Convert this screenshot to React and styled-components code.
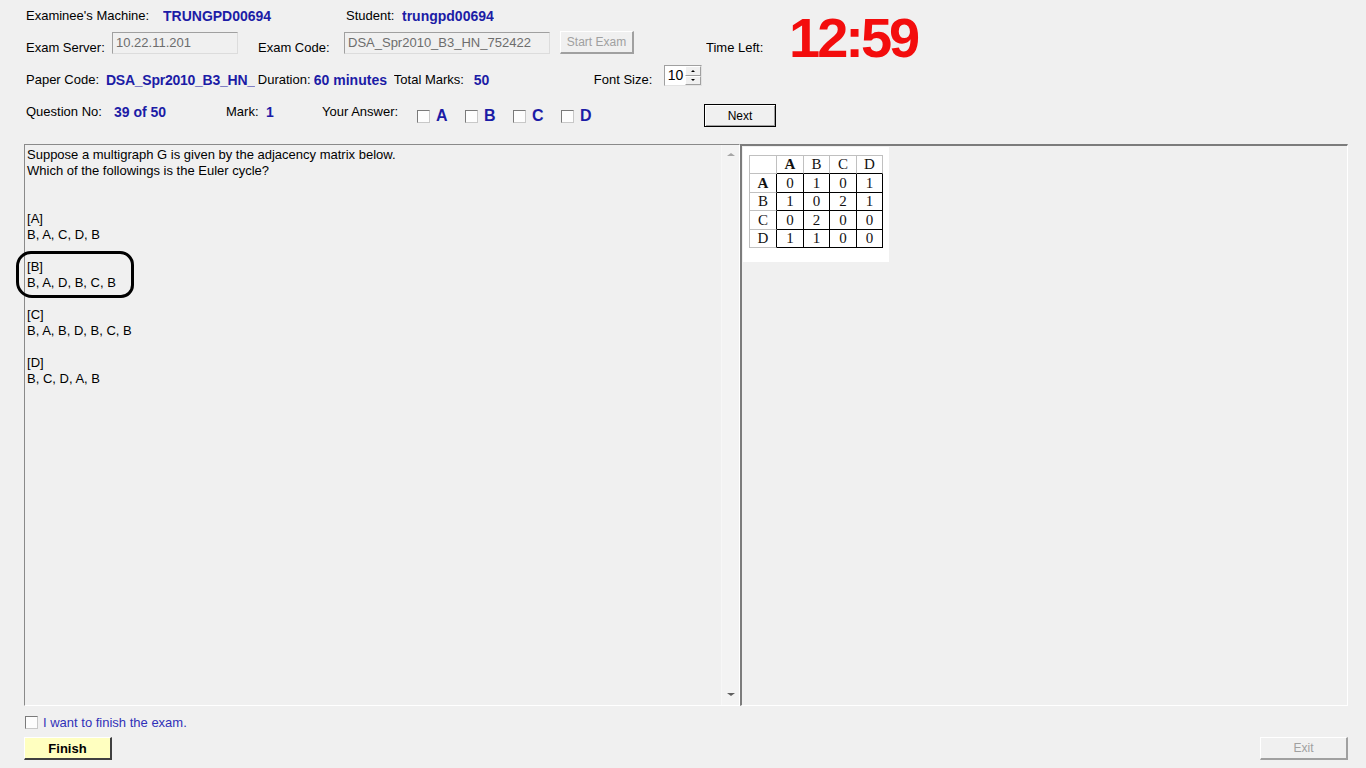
import React from 'react';
import styled, { createGlobalStyle } from 'styled-components';

const GlobalStyle = createGlobalStyle`
  html, body {
    margin: 0;
    padding: 0;
    background: #f0f0f0;
  }
  body {
    font-family: "Liberation Sans", Arial, sans-serif;
    font-size: 13px;
    color: #000;
  }
`;

const matrix = [
  ['A', [0, 1, 0, 1]],
  ['B', [1, 0, 2, 1]],
  ['C', [0, 2, 0, 0]],
  ['D', [1, 1, 0, 0]],
];

const options = [
  { key: 'A', text: 'B, A, C, D, B' },
  { key: 'B', text: 'B, A, D, B, C, B', circled: true },
  { key: 'C', text: 'B, A, B, D, B, C, B' },
  { key: 'D', text: 'B, C, D, A, B' },
];

const App = () => {
  return (
    <Window>
      <GlobalStyle />
      <Header>
        <Row $top={8} $h={16}>
          <Label $w={137}>Examinee's Machine:</Label>
          <Value $w={183}>TRUNGPD00694</Value>
          <Label $w={56}>Student:</Label>
          <Value>trungpd00694</Value>
        </Row>

        <Row $top={8} $h={22} $align="flex-end">
          <Label $w={86} $low>Exam Server:</Label>
          <ReadOnlyBox $w={126}>10.22.11.201</ReadOnlyBox>
          <Label $w={86} $ml={20} $low>Exam Code:</Label>
          <ReadOnlyBox $w={206}>DSA_Spr2010_B3_HN_752422</ReadOnlyBox>
          <FlatButton $w={74} $ml={10} disabled>Start Exam</FlatButton>
          <Label $w={83} $ml={72} $low>Time Left:</Label>
          <Timer>12:59</Timer>
        </Row>

        <Row $top={14} $h={24}>
          <Label $w={80}>Paper Code:</Label>
          <PaperCode>DSA_Spr2010_B3_HN_</PaperCode>
          <Label $w={56}>Duration:</Label>
          <Value $w={80}>60 minutes</Value>
          <Label $w={80}>Total Marks:</Label>
          <Value $w={120}>50</Value>
          <Label $w={70}>Font Size:</Label>
          <Spinner>
            <SpinValue>10</SpinValue>
            <SpinButtons>
              <SpinBtn><ArrowUp /></SpinBtn>
              <SpinBtn><ArrowDown /></SpinBtn>
            </SpinButtons>
          </Spinner>
        </Row>

        <Row $top={12} $h={22} $align="flex-start">
          <Label $w={88}>Question No:</Label>
          <Value $w={112}>39 of 50</Value>
          <Label $w={40}>Mark:</Label>
          <Value $w={56}>1</Value>
          <Label $w={95}>Your Answer:</Label>
          {['A', 'B', 'C', 'D'].map((k) => (
            <AnswerOption key={k}>
              <CheckBox />
              <AnswerLetter>{k}</AnswerLetter>
            </AnswerOption>
          ))}
          <NextButton>Next</NextButton>
        </Row>
      </Header>

      <Panels>
        <QuestionPanel>
          <QuestionText>
            <Para $after={32}>
              Suppose a multigraph G is given by the adjacency matrix below.
              <br />
              Which of the followings is the Euler cycle?
            </Para>
            {options.map((o) => (
              <Para key={o.key} $after={16} $circled={o.circled}>
                [{o.key}]
                <br />
                {o.text}
              </Para>
            ))}
          </QuestionText>
          <ScrollBar>
            <ScrollUp />
            <ScrollDown />
          </ScrollBar>
        </QuestionPanel>

        <ImagePanel>
          <Picture>
            <MatrixGrid>
              <Cell $r="#c0c0c0" $b="#c0c0c0" />
              {['A', 'B', 'C', 'D'].map((h, i) => (
                <Cell key={h} $r="#c0c0c0" $b="#000" $bold={i === 0}>{h}</Cell>
              ))}
              {matrix.map(([name, row], ri) => (
                <React.Fragment key={name}>
                  <Cell $r="#000" $b="#c0c0c0" $bold={ri === 0}>{name}</Cell>
                  {row.map((v, ci) => (
                    <Cell key={ci} $r="#000" $b="#000">{v}</Cell>
                  ))}
                </React.Fragment>
              ))}
            </MatrixGrid>
          </Picture>
        </ImagePanel>
      </Panels>

      <FinishCheckRow>
        <CheckBox />
        <FinishText>I want to finish the exam.</FinishText>
      </FinishCheckRow>

      <BottomBar>
        <FinishButton>Finish</FinishButton>
        <FlatButton $w={88} disabled>Exit</FlatButton>
      </BottomBar>
    </Window>
  );
};

export default App;

const Window = styled.div`
  width: 1366px;
  height: 768px;
  box-sizing: border-box;
  padding: 0 18px 0 24px;
  display: flex;
  flex-direction: column;
  overflow: hidden;
  background: #f0f0f0;
`;

const Header = styled.div`
  padding-left: 2px;
  display: flex;
  flex-direction: column;
`;

const Row = styled.div`
  display: flex;
  align-items: ${(p) => p.$align || 'center'};
  height: ${(p) => p.$h}px;
  margin-top: ${(p) => p.$top}px;
  flex: none;
`;

const Label = styled.span`
  flex: none;
  width: ${(p) => (p.$w ? `${p.$w}px` : 'auto')};
  margin-left: ${(p) => p.$ml || 0}px;
  margin-bottom: ${(p) => (p.$low ? -2 : 0)}px;
  font-size: 13px;
  line-height: 16px;
  white-space: nowrap;
  overflow: hidden;
`;

const Value = styled(Label)`
  font-weight: bold;
  font-size: 14px;
  color: #1c1ca6;
`;

const PaperCode = styled(Value)`
  letter-spacing: -0.25px;
  margin-right: 3px;
`;

const ReadOnlyBox = styled.div`
  flex: none;
  box-sizing: border-box;
  width: ${(p) => p.$w}px;
  height: 22px;
  padding: 2px 3px;
  border: 1px solid;
  border-color: #a0a0a0 #dcdcdc #dcdcdc #a0a0a0;
  color: #6d6d6d;
  font-size: 13px;
  line-height: 16px;
  white-space: nowrap;
  overflow: hidden;
`;

const FlatButton = styled.button`
  flex: none;
  box-sizing: border-box;
  width: ${(p) => p.$w}px;
  height: 23px;
  margin-left: ${(p) => p.$ml || 0}px;
  padding: 0;
  background: #f0f0f0;
  border-style: solid;
  border-width: 1px 2px 2px 1px;
  border-color: #ffffff #a0a0a0 #a0a0a0 #ffffff;
  color: #a0a0a0;
  font-family: "Liberation Sans", Arial, sans-serif;
  font-size: 12px;
`;

const Timer = styled.div`
  flex: none;
  align-self: flex-start;
  margin-top: -22px;
  height: 56px;
  font-size: 56px;
  line-height: 56px;
  font-weight: bold;
  letter-spacing: -3px;
  color: #f30d0d;
`;

const Spinner = styled.div`
  flex: none;
  align-self: flex-start;
  margin-top: -3px;
  box-sizing: border-box;
  width: 38px;
  height: 21px;
  display: flex;
  background: #fff;
  border: 1px solid;
  border-color: #a0a0a0 #e3e3e3 #e3e3e3 #a0a0a0;
`;

const SpinValue = styled.div`
  flex: 1;
  padding-left: 3px;
  font-size: 14px;
  line-height: 19px;
`;

const SpinButtons = styled.div`
  width: 16px;
  display: flex;
  flex-direction: column;
`;

const SpinBtn = styled.div`
  flex: 1;
  display: flex;
  align-items: center;
  justify-content: center;
  background: #f0f0f0;
  border: 1px solid;
  border-color: #fff #a0a0a0 #a0a0a0 #fff;
`;

const ArrowUp = styled.span`
  width: 0;
  height: 0;
  border-left: 2px solid transparent;
  border-right: 2px solid transparent;
  border-bottom: 2px solid #000;
`;

const ArrowDown = styled.span`
  width: 0;
  height: 0;
  border-left: 2px solid transparent;
  border-right: 2px solid transparent;
  border-top: 2px solid #000;
`;

const AnswerOption = styled.div`
  flex: none;
  width: 48px;
  height: 16px;
  margin-top: 4px;
  display: flex;
  align-items: center;
  gap: 6px;
`;

const CheckBox = styled.span`
  flex: none;
  box-sizing: border-box;
  width: 13px;
  height: 13px;
  background: #fdfdfd;
  border: 1px solid;
  border-color: #7a7a7a #c8c8c8 #c8c8c8 #7a7a7a;
`;

const AnswerLetter = styled.span`
  font-size: 16px;
  font-weight: bold;
  line-height: 16px;
  color: #1c1ca6;
`;

const NextButton = styled.button`
  flex: none;
  box-sizing: border-box;
  margin-left: 95px;
  width: 72px;
  height: 23px;
  padding: 0;
  background: #f0f0f0;
  border: 1px solid #000;
  box-shadow: inset 1px 1px #fff, inset -1px -1px #a0a0a0;
  font-family: "Liberation Sans", Arial, sans-serif;
  font-size: 12px;
  color: #000;
`;

const Panels = styled.div`
  margin-top: 18px;
  height: 562px;
  flex: none;
  display: flex;
`;

const QuestionPanel = styled.div`
  width: 716px;
  box-sizing: border-box;
  display: flex;
  border: 1px solid;
  border-color: #8a8a8a #ffffff #ffffff #8a8a8a;
`;

const QuestionText = styled.div`
  flex: 1;
  padding: 2px 0 0 2px;
  font-size: 13px;
  line-height: 16px;
`;

const Para = styled.div`
  position: relative;
  margin-bottom: ${(p) => p.$after}px;

  ${(p) =>
    p.$circled &&
    `
    &::before {
      content: '';
      position: absolute;
      left: -11px;
      top: -8px;
      width: 118px;
      height: 47px;
      box-sizing: border-box;
      border: 3px solid #000;
      border-radius: 15px 14px 13px 16px;
    }
  `}
`;

const ScrollBar = styled.div`
  width: 17px;
  display: flex;
  flex-direction: column;
  justify-content: space-between;
  align-items: center;
  padding: 8px 0 9px;
  background: #f3f3f3;
  border-left: 1px solid #f7f7f7;
`;

const ScrollUp = styled.span`
  width: 0;
  height: 0;
  border-left: 4px solid transparent;
  border-right: 4px solid transparent;
  border-bottom: 3px solid #a6a6a6;
`;

const ScrollDown = styled.span`
  width: 0;
  height: 0;
  border-left: 4px solid transparent;
  border-right: 4px solid transparent;
  border-top: 3px solid #606060;
`;

const ImagePanel = styled.div`
  flex: 1;
  box-sizing: border-box;
  padding: 1px;
  border-style: solid;
  border-width: 2px 1px 1px 2px;
  border-color: #7c7c7c #ffffff #ffffff #7c7c7c;
`;

const Picture = styled.div`
  width: 146px;
  height: 115px;
  box-sizing: border-box;
  padding: 8px 0 0 6px;
  background: #fff;
`;

const MatrixGrid = styled.div`
  display: grid;
  grid-template-columns: 27px 27px 26px 27px 26px;
  grid-template-rows: 18px 19px 18px 19px 18px;
  width: max-content;
  border-top: 1px solid #c0c0c0;
  border-left: 1px solid #c0c0c0;
`;

const Cell = styled.div`
  box-sizing: border-box;
  display: flex;
  align-items: center;
  justify-content: center;
  border-right: 1px solid ${(p) => p.$r};
  border-bottom: 1px solid ${(p) => p.$b};
  font-family: "Liberation Serif", "Times New Roman", serif;
  font-size: 15px;
  font-weight: ${(p) => (p.$bold ? 'bold' : 'normal')};
  color: #111;
`;

const FinishCheckRow = styled.div`
  margin-top: 10px;
  padding-left: 1px;
  height: 13px;
  flex: none;
  display: flex;
  align-items: center;
  gap: 5px;
`;

const FinishText = styled.span`
  font-size: 13px;
  line-height: 13px;
  color: #3030b8;
`;

const BottomBar = styled.div`
  margin-top: 8px;
  flex: none;
  display: flex;
  justify-content: space-between;
`;

const FinishButton = styled.button`
  box-sizing: border-box;
  width: 88px;
  height: 23px;
  padding: 0;
  background: #ffffc0;
  border-style: solid;
  border-width: 1px 2px 2px 1px;
  border-color: #ffffff #404040 #404040 #ffffff;
  font-family: "Liberation Sans", Arial, sans-serif;
  font-size: 13px;
  font-weight: bold;
  color: #000;
`;
